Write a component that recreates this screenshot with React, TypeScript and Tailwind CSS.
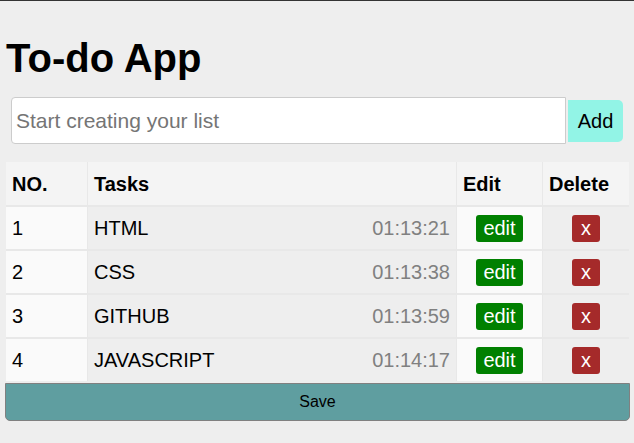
import { useState } from "react";

const initialTasks = [
  { id: 1, name: "HTML", time: "01:13:21" },
  { id: 2, name: "CSS", time: "01:13:38" },
  { id: 3, name: "GITHUB", time: "01:13:59" },
  { id: 4, name: "JAVASCRIPT", time: "01:14:17" },
];

export default function App() {
  const [tasks, setTasks] = useState(initialTasks);
  const [text, setText] = useState("");

  const addTask = () => {
    if (!text.trim()) return;
    const now = new Date().toTimeString().slice(0, 8);
    setTasks((prev) => [...prev, { id: prev.length + 1, name: text, time: now }]);
    setText("");
  };

  const removeTask = (id: number) => {
    setTasks((prev) => prev.filter((t) => t.id !== id));
  };

  return (
    <div className="min-h-screen bg-[#eeeeee] border-t border-[#333333] font-['Liberation_Sans',Arial,sans-serif] text-black">
      <h1 className="pl-[6px] pt-[34px] text-[40px] font-bold leading-[46px]">
        To-do App
      </h1>

      {/* Input row */}
      <div className="mt-[16px] ml-[11px] flex items-center gap-[2px]">
        <input
          value={text}
          onChange={(e) => setText(e.target.value)}
          placeholder="Start creating your list"
          className="w-[555px] h-[47px] bg-white border border-[#cccccc] rounded-l-[4px] pl-[4px] text-[21px] placeholder:text-[#757575] outline-none"
        />
        <button
          onClick={addTask}
          className="w-[55px] h-[42px] bg-[#92f4e6] rounded-r-[5px] text-[20px]"
        >
          Add
        </button>
      </div>

      {/* Table */}
      <div className="mt-[18px] ml-[6px] w-[623px] flex flex-col gap-[2px] bg-[#e8e8e8]">
        <div className="grid grid-cols-[81px_368px_85px_1fr] gap-x-px h-[43px] text-[20px] font-bold">
          <div className="bg-[#f4f4f4] px-[6px] flex items-center">NO.</div>
          <div className="bg-[#f4f4f4] px-[6px] flex items-center">Tasks</div>
          <div className="bg-[#f4f4f4] px-[6px] flex items-center">Edit</div>
          <div className="bg-[#f4f4f4] px-[6px] flex items-center">Delete</div>
        </div>
        {tasks.map((task, index) => (
          <div
            key={task.id}
            className="grid grid-cols-[81px_368px_85px_1fr] gap-x-px h-[42px] text-[20px]"
          >
            <div className="bg-[#fafafa] px-[6px] flex items-center">{index + 1}</div>
            <div className="bg-[#eeeeee] px-[6px] flex items-center justify-between">
              <span>{task.name}</span>
              <span className="text-[#808080]">{task.time}</span>
            </div>
            <div className="bg-[#fafafa] flex items-center justify-center">
              <button className="w-[47px] h-[27px] bg-[#008000] text-white rounded-[3px] leading-none">
                edit
              </button>
            </div>
            <div className="bg-[#eeeeee] flex items-center justify-center">
              <button
                onClick={() => removeTask(task.id)}
                className="w-[28px] h-[27px] bg-[#a52a2a] text-white rounded-[3px] leading-none"
              >
                x
              </button>
            </div>
          </div>
        ))}
      </div>

      <button className="mt-[2px] ml-[5px] w-[625px] h-[38px] bg-[#5f9ea0] border border-[#808080] rounded-b-[5px] text-[16px]">
        Save
      </button>
    </div>
  );
}
